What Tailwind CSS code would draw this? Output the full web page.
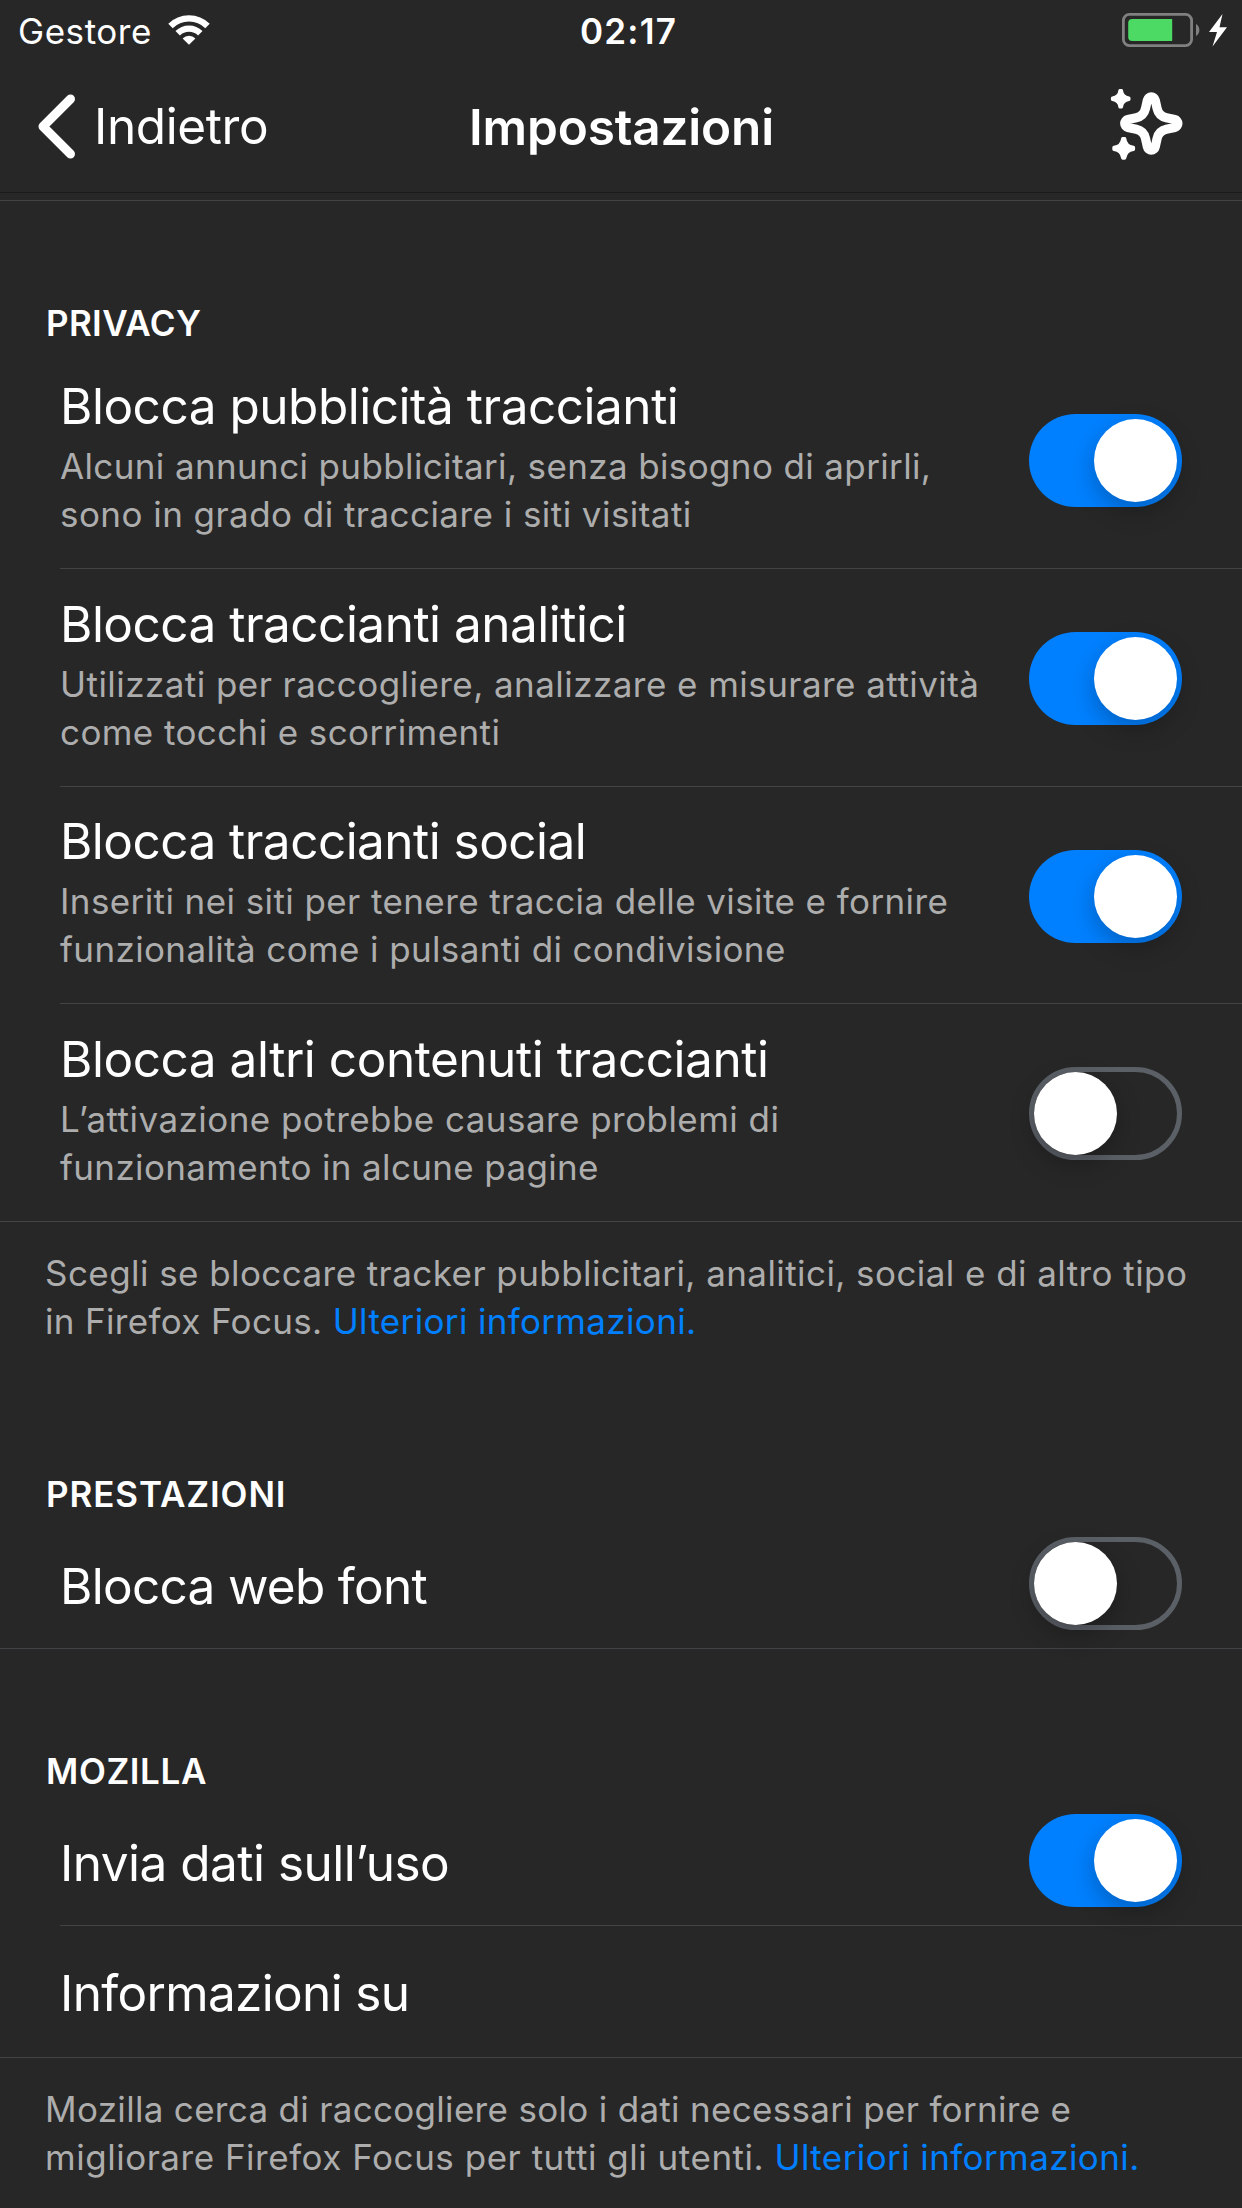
<!DOCTYPE html>
<html lang="it">
<head>
<meta charset="utf-8">
<title>Impostazioni</title>
<script src="https://cdn.jsdelivr.net/npm/@tailwindcss/browser@4"></script>
</head>
<body class="bg-[#272727] text-white font-['Inter','Liberation_Sans',sans-serif] w-[1242px] h-[2208px] overflow-hidden">

<!-- Status bar -->
<div class="grid grid-cols-3 h-[62px] text-[35px] leading-[62px]">
  <div class="flex pl-[18px]">
    <span class="tracking-[0.55px]">Gestore</span>
    <svg class="w-[42px] h-[30px] mt-[15px] ml-[16px]" viewBox="0 0 42 30" fill="none" stroke="#fff" stroke-width="6.3">
      <path d="M2.5 11 A26.2 26.2 0 0 1 39.5 11"/>
      <path d="M9.7 18.2 A16 16 0 0 1 32.3 18.2"/>
      <path d="M21 29.8 L14.6 23.4 A9 9 0 0 1 27.4 23.4 Z" fill="#fff" stroke="none"/>
    </svg>
  </div>
  <div class="flex justify-center pl-[15px] font-semibold tracking-[1.2px]">02:17</div>
  <div class="flex justify-end pr-[14px]">
    <svg class="w-[106px] h-[36px] mt-[12px]" viewBox="0 0 106 36">
      <rect x="1.4" y="2.4" width="68.2" height="31.2" rx="6" fill="none" stroke="#808080" stroke-width="2.8"/>
      <path d="M10 7 H50 V29 H10 A4 4 0 0 1 6 25 V11 A4 4 0 0 1 10 7 Z" transform="translate(.2 0)" fill="#4cd964" />
      <path d="M74 12 A7 7 0 0 1 74 24 Z" fill="#808080"/>
      <path d="M100.5 2 L87 20 H95 L90.500 34.500 L105 15.300 H97.500 Z" fill="#fff"/>
    </svg>
  </div>
</div>

<!-- Navigation bar -->
<header class="grid grid-cols-3 items-center h-[130px] text-[49.5px] leading-[60px]">
  <a class="flex items-center pl-[36px] pb-[2px] tracking-[-0.39px]">
    <svg class="w-[42px] h-[66px]" viewBox="0 0 42 66" fill="none" stroke="#fff" stroke-width="9" stroke-linecap="round" stroke-linejoin="round">
      <path d="M34.500 6 L7 33.500 L34.500 61"/>
    </svg>
    <span class="ml-[16px]">Indietro</span>
  </a>
  <h1 class="text-center pl-px font-semibold tracking-[-0.18px]">Impostazioni</h1>
  <div class="flex justify-end pr-[53px] pb-[6px]">
    <svg class="w-[80px] h-[80px]" viewBox="1108 84 80 80" fill="#fff" stroke="#fff" stroke-linejoin="round">
      <path transform="translate(1150.3 123.5)" fill="none" stroke-width="9.200" d="M-3.900 -23.500 A4 4 0 0 1 3.900 -23.500 L5.800 -15 Q7.500 -7.500 15 -5.800 L23.500 -3.900 A4 4 0 0 1 23.500 3.900 L15 5.800 Q7.500 7.500 5.800 15 L3.900 23.500 A4 4 0 0 1 -3.900 23.500 L-5.800 15 Q-7.500 7.500 -15 5.800 L-23.500 3.900 A4 4 0 0 1 -23.500 -3.900 L-15 -5.800 Q-7.500 -7.500 -5.800 -15 Z"/>
      <path transform="translate(1119.7 98.700)" stroke-width="3" d="M-.8 -8.300 H.8 Q1.600 -1.600 8.300 -.8 V.8 Q1.600 1.600 .8 8.300 H-.8 Q-1.600 1.600 -8.300 .8 V-.8 Q-1.600 -1.600 -.8 -8.300 Z"/>
      <path transform="translate(1122.7 148.300)" stroke-width="3.400" d="M-.9 -9.700 H.9 Q1.900 -1.900 9.700 -.9 V.9 Q1.900 1.900 .9 9.700 H-.9 Q-1.900 1.900 -9.700 .9 V-.9 Q-1.900 -1.900 -.9 -9.700 Z"/>
    </svg>
  </div>
</header>
<div class="h-[9px] border-t border-b border-t-[#1b1b1b] border-b-[#434343]"></div>

<main>
  <section>
    <h2 class="pt-[98px] pl-[46px] text-[35px] leading-[48px] font-semibold tracking-[0.35px]">PRIVACY</h2>

    <div class="mt-[4px]">
      <div class="flex justify-between ml-[60px] pr-[60px] h-[218px] border-b border-[#434343]">
        <div class="pt-[25px] whitespace-nowrap">
          <h3 class="text-[49.5px] leading-[60px] tracking-[-0.48px]">Blocca pubblicità traccianti</h3>
          <p class="mt-[6px] text-[35px] leading-[48px] text-[#adadad]"><span class="block tracking-[0.37px]">Alcuni annunci pubblicitari, senza bisogno di aprirli,</span><span class="block tracking-[0.45px]">sono in grado di tracciare i siti visitati</span></p>
        </div>
        <div class="flex justify-end mt-[63px] w-[153px] h-[93px] p-[5px] rounded-full bg-[#0080ff]"><div class="size-[83px] rounded-full bg-white shadow-[0_9px_24px_rgba(0,0,0,0.25)]"></div></div>
      </div>
      <div class="flex justify-between ml-[60px] pr-[60px] h-[218px] border-b border-[#434343]">
        <div class="pt-[25px] whitespace-nowrap">
          <h3 class="text-[49.5px] leading-[60px] tracking-[-0.51px]">Blocca traccianti analitici</h3>
          <p class="mt-[6px] text-[35px] leading-[48px] text-[#adadad]"><span class="block tracking-[0.45px]">Utilizzati per raccogliere, analizzare e misurare attività</span><span class="block tracking-[0.4px]">come tocchi e scorrimenti</span></p>
        </div>
        <div class="flex justify-end mt-[63px] w-[153px] h-[93px] p-[5px] rounded-full bg-[#0080ff]"><div class="size-[83px] rounded-full bg-white shadow-[0_9px_24px_rgba(0,0,0,0.25)]"></div></div>
      </div>
      <div class="flex justify-between ml-[60px] pr-[60px] h-[217px] border-b border-[#434343]">
        <div class="pt-[24px] whitespace-nowrap">
          <h3 class="text-[49.5px] leading-[60px] tracking-[-0.53px]">Blocca traccianti social</h3>
          <p class="mt-[6px] text-[35px] leading-[48px] text-[#adadad]"><span class="block tracking-[0.41px]">Inseriti nei siti per tenere traccia delle visite e fornire</span><span class="block tracking-[0.37px]">funzionalità come i pulsanti di condivisione</span></p>
        </div>
        <div class="flex justify-end mt-[63px] w-[153px] h-[93px] p-[5px] rounded-full bg-[#0080ff]"><div class="size-[83px] rounded-full bg-white shadow-[0_9px_24px_rgba(0,0,0,0.25)]"></div></div>
      </div>
      <div class="flex justify-between pl-[60px] pr-[60px] h-[218px] border-b border-[#434343]">
        <div class="pt-[25px] whitespace-nowrap">
          <h3 class="text-[49.5px] leading-[60px] tracking-[-0.46px]">Blocca altri contenuti traccianti</h3>
          <p class="mt-[6px] text-[35px] leading-[48px] text-[#adadad]"><span class="block tracking-[0.45px]">L’attivazione potrebbe causare problemi di</span><span class="block tracking-[0.35px]">funzionamento in alcune pagine</span></p>
        </div>
        <div class="mt-[63px] w-[153px] h-[93px] rounded-full border-[5px] border-[#5b6067]"><div class="size-[83px] rounded-full bg-white shadow-[0_9px_24px_rgba(0,0,0,0.25)]"></div></div>
      </div>
    </div>

    <p class="pt-[27px] pl-[45px] text-[35px] leading-[48px] text-[#adadad] whitespace-nowrap"><span class="block tracking-[0.43px]">Scegli se bloccare tracker pubblicitari, analitici, social e di altro tipo</span><span class="block tracking-[0.34px]">in Firefox Focus. <a class="text-[#0080ff]">Ulteriori informazioni.</a></span></p>
  </section>

  <section>
    <h2 class="pt-[125px] pl-[46px] text-[35px] leading-[48px] font-semibold tracking-[0.9px]">PRESTAZIONI</h2>
    <div class="flex justify-between pl-[60px] pr-[60px] h-[131px] border-b border-[#414146]">
      <h3 class="pt-[38px] text-[49.5px] leading-[60px] tracking-[-0.7px]">Blocca web font</h3>
      <div class="mt-[19px] w-[153px] h-[93px] rounded-full border-[5px] border-[#5b6067]"><div class="size-[83px] rounded-full bg-white shadow-[0_9px_24px_rgba(0,0,0,0.25)]"></div></div>
    </div>
  </section>

  <section>
    <h2 class="pt-[98px] pl-[46px] text-[35px] leading-[48px] font-semibold tracking-[0.6px]">MOZILLA</h2>
    <div class="flex justify-between ml-[60px] pr-[60px] h-[131px] border-b border-[#434343]">
      <h3 class="pt-[38px] text-[49.5px] leading-[60px] tracking-[-0.51px]">Invia dati sull’uso</h3>
      <div class="flex justify-end mt-[19px] w-[153px] h-[93px] p-[5px] rounded-full bg-[#0080ff]"><div class="size-[83px] rounded-full bg-white shadow-[0_9px_24px_rgba(0,0,0,0.25)]"></div></div>
    </div>
    <div class="pl-[60px] h-[132px] border-b border-[#434343]">
      <h3 class="pt-[37px] text-[49.5px] leading-[60px] tracking-[-0.66px]">Informazioni su</h3>
    </div>
    <p class="pt-[27px] pl-[45px] text-[35px] leading-[48px] text-[#adadad] whitespace-nowrap"><span class="block tracking-[0.31px]">Mozilla cerca di raccogliere solo i dati necessari per fornire e</span><span class="block tracking-[0.52px]">migliorare Firefox Focus per tutti gli utenti. <a class="text-[#0080ff] tracking-[0.4px]">Ulteriori informazioni.</a></span></p>
  </section>
</main>
</body>
</html>
